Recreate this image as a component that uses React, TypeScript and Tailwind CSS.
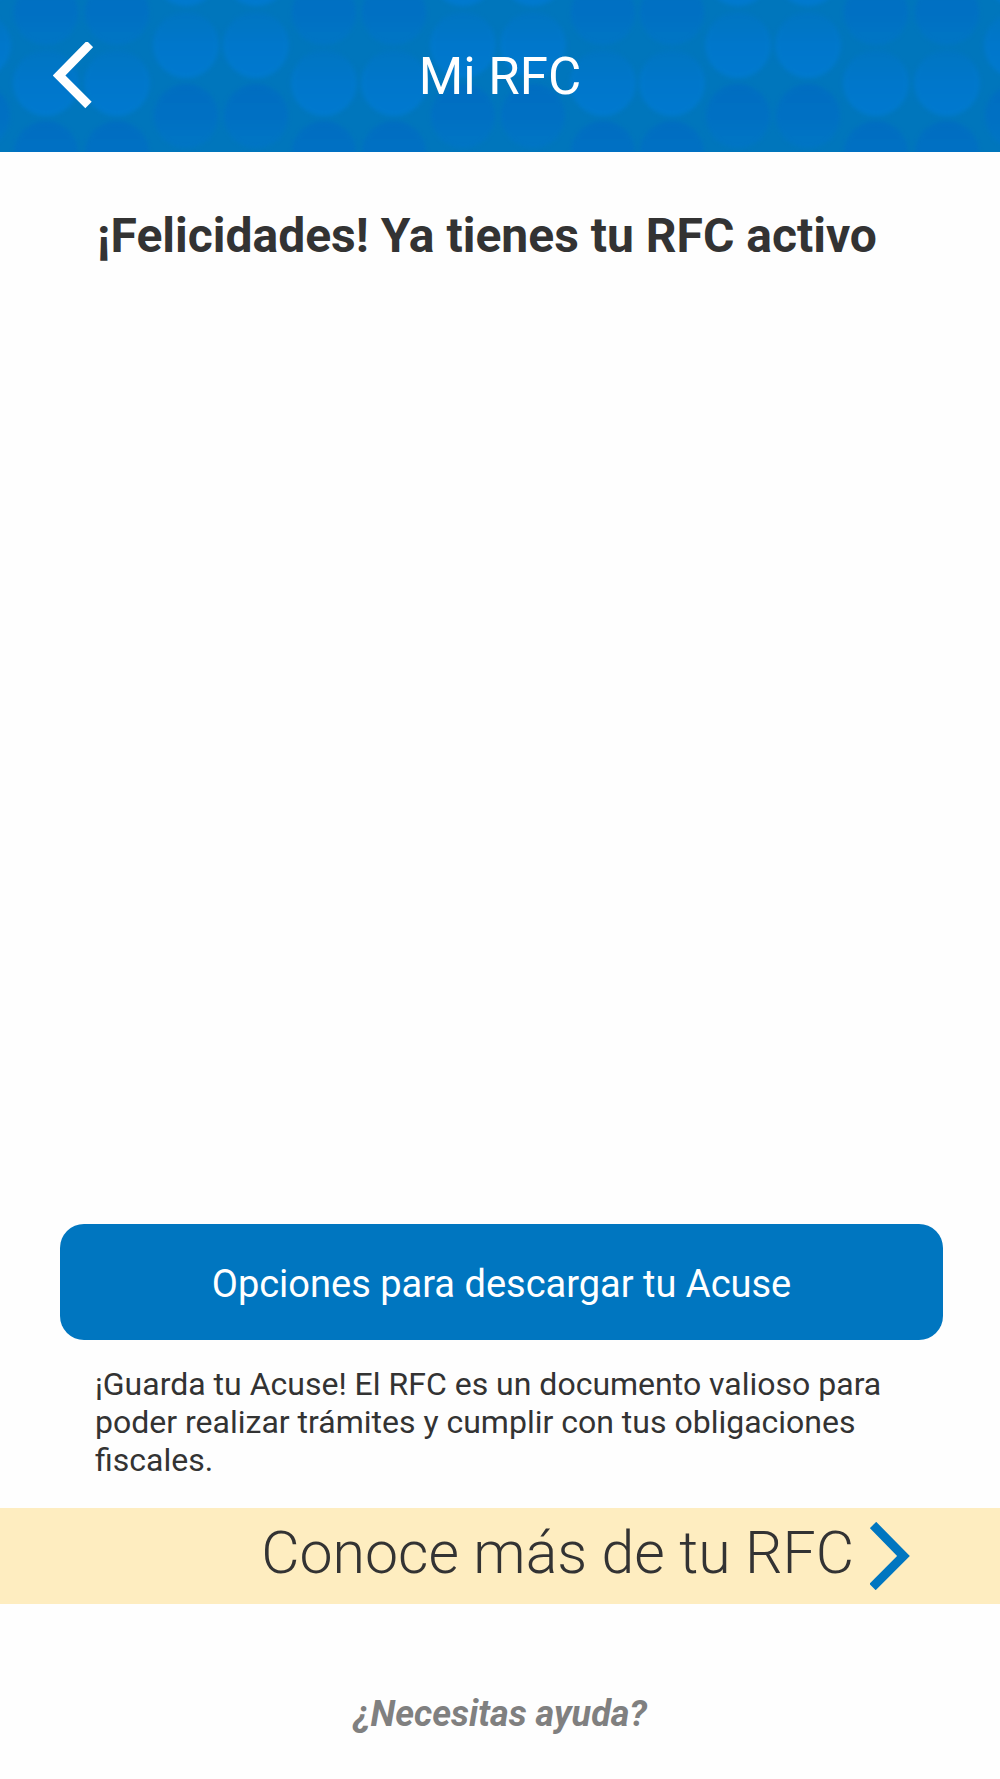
const CIRCLE_COLUMNS = [
  { x: -22, high: true },
  { x: 46, high: false },
  { x: 117, high: false },
  { x: 186, high: true },
  { x: 256, high: true },
  { x: 324, high: false },
  { x: 394, high: false },
  { x: 463, high: true },
  { x: 533, high: true },
  { x: 603, high: false },
  { x: 672, high: false },
  { x: 738, high: true },
  { x: 808, high: true },
  { x: 876, high: false },
  { x: 947, high: false },
  { x: 1017, high: true },
];

function HeaderPattern() {
  return (
    <svg
      className="absolute inset-0 h-full w-full"
      viewBox="0 0 1000 152"
      preserveAspectRatio="xMidYMid slice"
      aria-hidden="true"
    >
      <defs>
        <linearGradient id="dark" x1="0" y1="0" x2="0" y2="1">
          <stop offset="0" stopColor="#006dc2" />
          <stop offset="0.5" stopColor="#0070c4" />
          <stop offset="1" stopColor="#0076c6" />
        </linearGradient>
        <linearGradient id="light" x1="0" y1="0" x2="0" y2="1">
          <stop offset="0" stopColor="#0075c2" />
          <stop offset="0.5" stopColor="#0078cd" />
          <stop offset="1" stopColor="#007ad1" />
        </linearGradient>
        <filter id="soft">
          <feGaussianBlur stdDeviation="2" />
        </filter>
      </defs>
      <g filter="url(#soft)" opacity="0.9">
        {CIRCLE_COLUMNS.map(({ x, high }) => (
          <g key={x}>
            <circle cx={x} cy={high ? -26 : 13} r="32" fill={high ? "url(#light)" : "url(#dark)"} />
            <circle cx={x} cy={high ? 45 : 83} r="33" fill="url(#light)" />
            <circle cx={x} cy={high ? 116 : 153} r="32" fill="url(#dark)" />
          </g>
        ))}
      </g>
    </svg>
  );
}

function Chevron({ direction }: { direction: "left" | "right" }) {
  return (
    <svg className="h-[68px] w-10 shrink-0" viewBox="0 0 40 68" fill="none" aria-hidden="true">
      <path
        d={direction === "left" ? "M37 2 L6 33.500 L35.500 63" : "M3 3 L33.500 34 L2.500 65"}
        stroke="currentColor"
        strokeWidth="9"
      />
    </svg>
  );
}

export default function App() {
  return (
    <div className="flex min-h-screen flex-col bg-[#fefefe] font-['Roboto',sans-serif] text-[#333333]">
      <header className="relative flex h-[152px] items-center bg-[#0076bc] text-white">
        <HeaderPattern />
        <div className="relative grid w-full grid-cols-[1fr_auto_1fr] items-center px-[53px]">
          <button type="button" aria-label="Regresar" className="justify-self-start">
            <Chevron direction="left" />
          </button>
          <h1 className="pt-0.5 text-[51px] leading-[60px]">Mi RFC</h1>
        </div>
      </header>

      <main className="flex grow flex-col">
        <h2 className="px-[97px] pt-[54px] text-[48px] leading-[60px] font-bold">
          ¡Felicidades! Ya tienes tu RFC activo
        </h2>
        <div className="mt-auto pr-[57px] pl-[60px]">
          <button
            type="button"
            className="flex h-[116px] w-full items-center justify-center rounded-3xl bg-[#0076c0] pt-1 text-[38px] leading-10 text-white"
          >
            Opciones para descargar tu Acuse
          </button>
        </div>
        <p className="px-[95px] pt-[25px] pb-[29px] text-[32px] leading-[38px]">
          ¡Guarda tu Acuse! El RFC es un documento valioso para poder realizar trámites y cumplir con tus
          obligaciones fiscales.
        </p>
        <a
          href="#rfc"
          className="flex h-24 items-center justify-end gap-4 bg-[#feedc0] pr-[90px] text-[59px] leading-[72px] font-light"
        >
          <span className="pb-1.5">Conoce más de tu RFC</span>
          <span className="text-[#0076c0]">
            <Chevron direction="right" />
          </span>
        </a>
      </main>

      <footer className="flex h-[175px] items-end justify-center pb-[45px]">
        <a href="#ayuda" className="text-[36px] leading-10 font-bold text-[#808080] italic">
          ¿Necesitas ayuda?
        </a>
      </footer>
    </div>
  );
}
